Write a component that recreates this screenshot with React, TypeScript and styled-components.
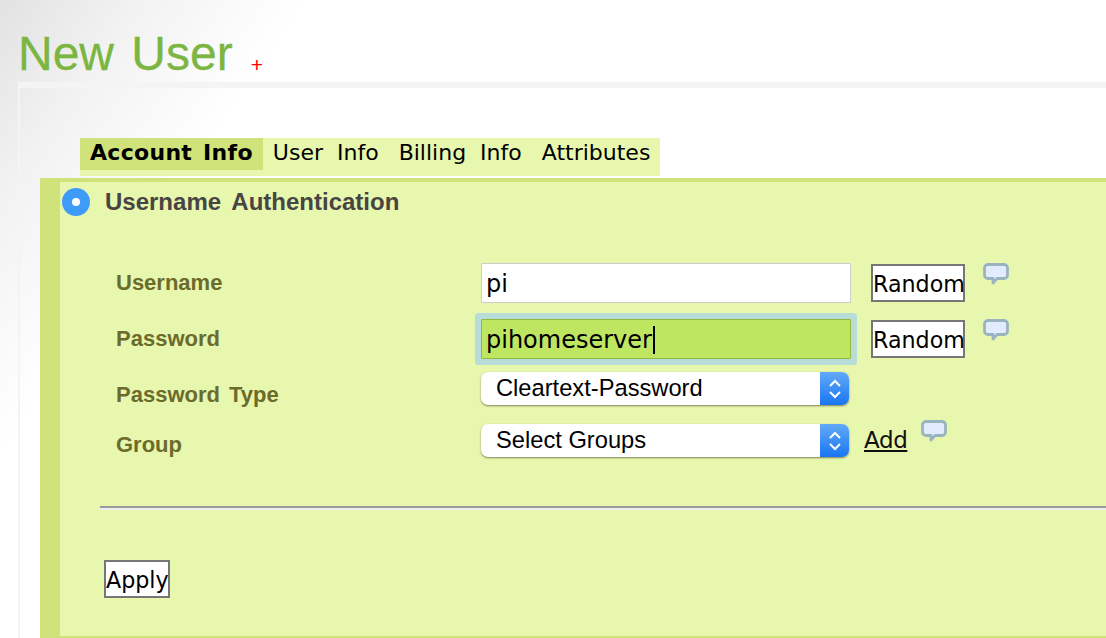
import React from "react";
import styled, { createGlobalStyle } from "styled-components";

const Global = createGlobalStyle`
  html, body { margin: 0; padding: 0; height: 100%; background: #fff; overflow: hidden; }
  #root { width: 1106px; height: 638px; }
`;

const Page = styled.div`
  width: 1106px;
  height: 638px;
  overflow: hidden;
  box-sizing: border-box;
  padding-top: 24px;
  background: linear-gradient(124deg, #e2e2e2 0%, #f2f2f2 9%, #ffffff 20%);
  font-family: "DejaVu Sans", Verdana, sans-serif;
`;

const TitleRow = styled.div`
  display: flex;
  align-items: flex-end;
  height: 58px;
  padding-left: 18px;
`;

const Title = styled.h1`
  margin: 0 0 -1px;
  font: 400 48px/58px "Liberation Sans", Arial, sans-serif;
  color: #7cb642;
  word-spacing: 4px;
  -webkit-text-stroke: 0.3px #7cb642;
`;

const Plus = styled.span`
  margin: 0 0 0 18px;
  font: 400 21px/24px "Liberation Sans", Arial, sans-serif;
  color: #f00;
  padding-bottom: 5px;
`;

const Panel = styled.div`
  margin-left: 18px;
  box-sizing: border-box;
  height: 556px;
  border-top: 6px solid #f4f4f4;
  border-left: 2px solid #f4f4f4;
  padding: 50px 0 0 20px;
`;

const Tabs = styled.ul`
  display: flex;
  list-style: none;
  margin: 0 0 2px 40px;
  padding: 0;
  width: max-content;
  height: 38px;
  background: #e7f7ae;
  font-size: 22px;
`;

const Tab = styled.li<{ $active?: boolean }>`
  height: 32px;
  line-height: 30px;
  padding: 0 10px;
  word-spacing: ${(p) => (p.$active ? "3px" : "7px")};
  color: #000;
  background: ${(p) => (p.$active ? "#cfe37a" : "transparent")};
  font-weight: ${(p) => (p.$active ? 700 : 400)};
  letter-spacing: ${(p) => (p.$active ? "0.3px" : "0")};
`;

const Fieldset = styled.section`
  box-sizing: border-box;
  width: 1066px;
  height: 460px;
  background: #e7f7ae;
  border-top: 4px solid #cfe37a;
  border-left: 20px solid #cfe37a;
  border-bottom: 2px solid #cfe37a;
  padding-top: 5px;
`;

const Heading = styled.div`
  display: flex;
  align-items: center;
  height: 30px;
  padding-left: 2px;
  gap: 15px;
`;

const Radio = styled.span`
  width: 28px;
  height: 28px;
  border-radius: 50%;
  background: #3f9bf8;
  display: flex;
  align-items: center;
  justify-content: center;
  &::after {
    content: "";
    width: 8px;
    height: 8px;
    border-radius: 50%;
    background: #fff;
  }
`;

const HeadingText = styled.h2`
  margin: 0;
  font: 700 24px/30px "Liberation Sans", Arial, sans-serif;
  color: #484444;
  word-spacing: 4.5px;
`;

const Form = styled.div`
  margin: 38px 0 0 56px;
  width: 990px;
`;

const Row = styled.div<{ $h: number }>`
  display: grid;
  grid-template-columns: 365px auto;
  justify-content: start;
  align-items: center;
  height: ${(p) => p.$h}px;
`;

const Label = styled.label`
  font: 700 22px/30px "Liberation Sans", Arial, sans-serif;
  color: #6b6b2b;
  word-spacing: 4px;
`;

const TypeLabel = styled(Label)`
  padding-top: 3px;
  word-spacing: 3px;
`;

const Controls = styled.div`
  display: flex;
  align-items: center;
  position: relative;
`;

const SelectControls = styled(Controls)`
  align-self: start;
  margin-top: 5px;
`;

const TextField = styled.div<{ $focused?: boolean }>`
  box-sizing: border-box;
  width: 370px;
  height: 40px;
  display: flex;
  align-items: center;
  padding: 1px 0 0 4px;
  font-size: 24px;
  color: #000;
  background: ${(p) => (p.$focused ? "#bfe660" : "#fff")};
  border: 1px solid ${(p) => (p.$focused ? "#96b83a" : "#ccc")};
  box-shadow: ${(p) => (p.$focused ? "0 0 0 6px #b8dcd8" : "none")};
  border-radius: 1px;
`;

const Caret = styled.span`
  display: inline-block;
  width: 2px;
  height: 28px;
  background: #000;
  margin-left: 1px;
`;

const Button = styled.button`
  box-sizing: border-box;
  height: 38px;
  padding: 2px 0 0;
  margin: 0;
  background: #fff;
  border: 2px solid #767676;
  font: 400 22.2px/32px "DejaVu Sans", Verdana, sans-serif;
  color: #000;
`;

const RandomButton = styled(Button)`
  width: 94px;
  margin-left: 20px;
`;

const Bubble = styled.svg`
  width: 28px;
  height: 26px;
  margin: -16px 0 0 17px;
  filter: blur(0.5px);
`;

const SelectBox = styled.div`
  box-sizing: border-box;
  width: 368px;
  height: 33px;
  display: flex;
  align-items: center;
  justify-content: space-between;
  background: #fff;
  border-radius: 7px;
  box-shadow: 0 1px 2px rgba(70, 70, 40, 0.65);
  overflow: hidden;
  font: 400 23.7px/33px "Liberation Sans", Arial, sans-serif;
  color: #000;
  padding-left: 15px;
`;

const SelectArrow = styled.span`
  width: 29px;
  height: 33px;
  background: linear-gradient(#62aaf8, #1a75f0);
  display: flex;
  align-items: center;
  justify-content: center;
`;

const AddLink = styled.a`
  margin: -2px 0 0 15px;
  font: 400 23px/30px "DejaVu Sans", Verdana, sans-serif;
  color: #111;
  text-decoration: underline;
  letter-spacing: -0.4px;
`;

const AddBubble = styled(Bubble)`
  margin-left: 13px;
  margin-top: -18px;
`;

const Rule = styled.hr`
  margin: 35px 0 0 -16px;
  height: 4px;
  border: 0;
  border-top: 2px solid #999;
  border-bottom: 2px solid #eee;
  box-sizing: border-box;
`;

const ApplyButton = styled(Button)`
  display: block;
  width: 66px;
  margin: 50px 0 0 44px;
`;

const BubbleShape = () => (
  <path
    d="M6 2.5h16a3.5 3.5 0 0 1 3.5 3.5v7a3.5 3.5 0 0 1-3.5 3.5h-7l-4 4.5v-4.5H6A3.5 3.5 0 0 1 2.5 13V6A3.5 3.5 0 0 1 6 2.5z"
    fill="#e2ecfe"
    stroke="#9ab4bf"
    strokeWidth="2.8"
    strokeLinejoin="round"
  />
);

const Updown = () => (
  <svg width="14" height="24" viewBox="0 0 14 24" fill="none" stroke="#fff" strokeWidth="2">
    <path d="M2 9l5-5 5 5M2 15l5 5 5-5" />
  </svg>
);

export default function App() {
  return (
    <Page>
      <Global />
      <TitleRow>
        <Title>New User</Title>
        <Plus>+</Plus>
      </TitleRow>
      <Panel>
        <Tabs>
          <Tab $active>Account Info</Tab>
          <Tab>User Info</Tab>
          <Tab>Billing Info</Tab>
          <Tab>Attributes</Tab>
        </Tabs>
        <Fieldset>
          <Heading>
            <Radio />
            <HeadingText>Username Authentication</HeadingText>
          </Heading>
          <Form>
            <Row $h={56}>
              <Label>Username</Label>
              <Controls>
                <TextField>pi</TextField>
                <RandomButton>Random</RandomButton>
                <Bubble viewBox="0 0 28 26"><BubbleShape /></Bubble>
              </Controls>
            </Row>
            <Row $h={56}>
              <Label>Password</Label>
              <Controls>
                <TextField $focused>
                  pihomeserver
                  <Caret />
                </TextField>
                <RandomButton>Random</RandomButton>
                <Bubble viewBox="0 0 28 26"><BubbleShape /></Bubble>
              </Controls>
            </Row>
            <Row $h={52}>
              <TypeLabel>Password Type</TypeLabel>
              <SelectControls>
                <SelectBox>
                  Cleartext-Password
                  <SelectArrow>
                    <Updown />
                  </SelectArrow>
                </SelectBox>
              </SelectControls>
            </Row>
            <Row $h={52}>
              <Label>Group</Label>
              <SelectControls>
                <SelectBox>
                  Select Groups
                  <SelectArrow>
                    <Updown />
                  </SelectArrow>
                </SelectBox>
                <AddLink href="#">Add</AddLink>
                <AddBubble viewBox="0 0 28 26"><BubbleShape /></AddBubble>
              </SelectControls>
            </Row>
            <Rule />
          </Form>
          <ApplyButton>Apply</ApplyButton>
        </Fieldset>
      </Panel>
    </Page>
  );
}
